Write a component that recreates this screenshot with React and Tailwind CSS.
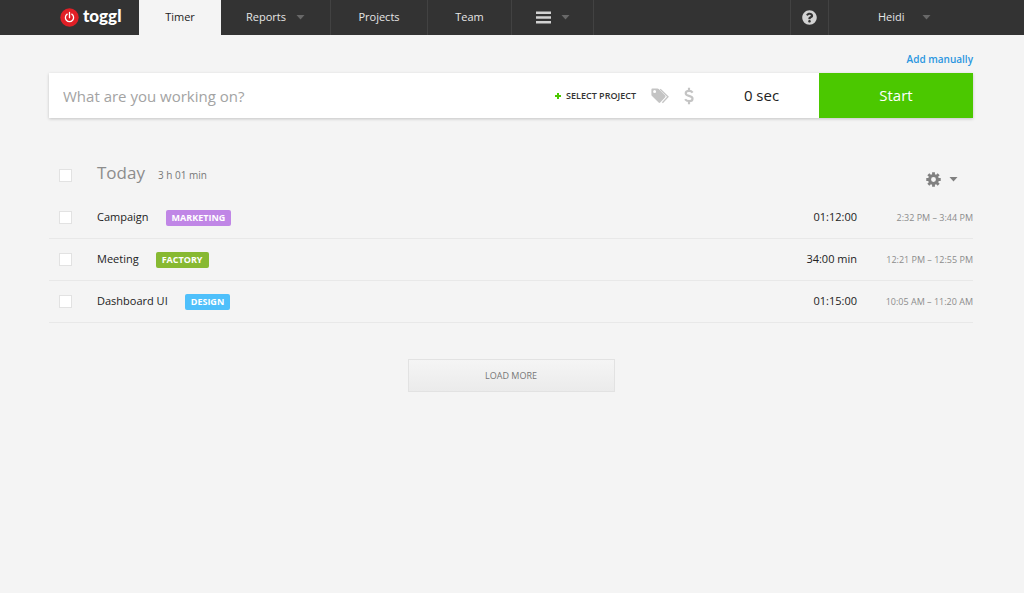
import { useState } from 'react'
import { FaQuestionCircle } from 'react-icons/fa'

const entries = [
  { id: 1, title: 'Campaign', project: 'MARKETING', color: 'bg-[#c086e6]', duration: '01:12:00', range: '2:32 PM – 3:44 PM' },
  { id: 2, title: 'Meeting', project: 'FACTORY', color: 'bg-[#87b932]', duration: '34:00 min', range: '12:21 PM – 12:55 PM' },
  { id: 3, title: 'Dashboard UI', project: 'DESIGN', color: 'bg-[#4fc0fb]', duration: '01:15:00', range: '10:05 AM – 11:20 AM' },
]

function Logo() {
  return (
    <a href="#" className="flex w-[139px] shrink-0 items-center gap-1 pl-[60px]">
      <svg width="19" height="19" viewBox="0 0 19 19" fill="none" className="shrink-0">
        <circle cx="9.5" cy="9.5" r="9.2" fill="#e01f26" />
        <path d="M7.2 6.1a4.1 4.1 0 1 0 4.6 0M9.5 4.5v5.2" stroke="#fff" strokeWidth="1.3" strokeLinecap="round" />
      </svg>
      <span className="pb-1 font-['Lato',sans-serif] text-[17px] leading-5 font-black text-white">toggl</span>
    </a>
  )
}

function Caret({ className }) {
  return (
    <svg width="9" height="5" viewBox="0 0 9 5" fill="currentColor" className={className}>
      <path d="M0.5 0h8L4.5 4.6z" />
    </svg>
  )
}

function BarsIcon() {
  return (
    <svg width="15" height="13" viewBox="0 0 15 13" fill="#d2d2d2">
      <path d="M0 0.5h15v2.4H0zM0 5.3h15v2.4H0zM0 10.1h15v2.4H0z" />
    </svg>
  )
}

function TagsIcon() {
  return (
    <svg width="18" height="16" viewBox="0 0 18 16">
      <path d="M9.2 1.2L17 8.7 11.4 14.8" fill="none" stroke="#c4c4c4" strokeWidth="1.3" />
      <path
        fillRule="evenodd"
        fill="#c4c4c4"
        d="M1.3 0.6h5.2c0.500 0 0.900 0.200 1.200 0.500l6.500 6.500c0.500 0.500 0.500 1.100 0 1.600l-5 5.300c-0.500 0.500-1.100 0.500-1.600 0L1 8C0.600 7.600 0.400 7.200 0.400 6.700V1.500c0-0.500 0.400-0.900 0.900-0.900zM3.600 2.100a1.500 1.500 0 1 0 0 3 1.500 1.500 0 0 0 0-3z"
      />
    </svg>
  )
}

function DollarIcon() {
  return (
    <svg width="10" height="18" viewBox="0 0 11 18" fill="none" stroke="#c4c4c4" strokeWidth="2.4">
      <path d="M5.5 0v3.500M5.500 14.500V18M9.500 5.300C8.600 4 7.200 3.300 5.600 3.300 3.400 3.300 1.900 4.400 1.900 6c0 1.700 1.500 2.400 3.600 2.900 2.300 0.600 3.900 1.300 3.900 3.100 0 1.700-1.600 2.700-3.800 2.700-1.900 0-3.500-0.700-4.400-2.100" />
    </svg>
  )
}

function GearIcon() {
  return (
    <svg width="15" height="15" viewBox="0 0 16 16" fill="none" stroke="currentColor">
      <circle cx="8" cy="8" r="4.2" strokeWidth="3.2" />
      <path
        strokeWidth="3"
        d="M8 0.3v3M8 12.7v3M0.3 8h3M12.7 8h3M2.5 2.5l2.1 2.1M11.4 11.4l2.1 2.1M2.5 13.500l2.100-2.100M11.400 4.600l2.100-2.100"
      />
    </svg>
  )
}

function Checkbox({ label }) {
  return (
    <input
      type="checkbox"
      aria-label={label}
      className="size-[13px] shrink-0 appearance-none border border-[#e2e2e2] bg-white checked:bg-[#4bc800]"
    />
  )
}

function Entry({ entry }) {
  return (
    <li className="flex h-[42px] items-center border-b border-[#e8e8e8] pl-[10px]">
      <Checkbox label={entry.title} />
      <span className="ml-[25px] text-[11px] text-[#222]">{entry.title}</span>
      <span className={`ml-[17px] rounded-xs px-[6px] text-[9px] leading-4 font-bold text-white ${entry.color}`}>
        {entry.project}
      </span>
      <span className="ml-auto text-[11px] text-[#222]">{entry.duration}</span>
      <span className="w-[116px] text-right text-[9px] text-[#8c8c8c]">{entry.range}</span>
    </li>
  )
}

export default function App() {
  const [task, setTask] = useState('')

  return (
    <div className="min-h-screen bg-[#f4f4f4] font-['Open_Sans',sans-serif]">
      <header className="flex h-[35px] bg-[#333] text-[11px] text-[#e6e6e6]">
        <Logo />
        <nav className="flex">
          <a href="#timer" className="flex w-[82px] items-center justify-center bg-[#f4f4f4] text-[#222]">Timer</a>
          <a href="#reports" className="flex w-[110px] items-center justify-center gap-[10px] border-r border-[#424242]">
            Reports
            <Caret className="text-[#686868]" />
          </a>
          <a href="#projects" className="flex w-[97px] items-center justify-center border-r border-[#424242]">Projects</a>
          <a href="#team" className="flex w-[84px] items-center justify-center border-r border-[#424242]">Team</a>
          <button aria-label="More" className="flex w-[82px] items-center justify-center gap-[10px] border-r border-[#424242]">
            <BarsIcon />
            <Caret className="text-[#686868]" />
          </button>
        </nav>
        <button aria-label="Help" className="ml-auto flex w-[39px] items-center justify-center border-x border-[#424242]">
          <FaQuestionCircle size={15} className="text-[#d2d2d2]" />
        </button>
        <button className="flex w-[195px] items-center gap-[17px] pl-[49px]">
          Heidi
          <Caret className="text-[#686868]" />
        </button>
      </header>

      <main className="pt-4 pr-[51px] pl-[49px]">
        <div className="flex justify-end">
          <a href="#manual" className="text-[10px] leading-4 font-semibold text-[#2a96e0]">Add manually</a>
        </div>

        {/* Timer bar */}
        <form onSubmit={(e) => e.preventDefault()} className="mt-[6px] flex h-[45px] items-center bg-white shadow-[0_1px_3px_rgba(0,0,0,0.2)]">
          <input
            aria-label="What are you working on?"
            placeholder="What are you working on?"
            value={task}
            onChange={(e) => setTask(e.target.value)}
            className="h-full min-w-0 flex-1 pl-[14px] text-[15px] text-[#222] outline-none placeholder:text-[#a3a3a3]"
          />
          <button type="button" className="flex items-center gap-1 text-[9px] font-semibold text-[#333]">
            <svg width="8" height="8" viewBox="0 0 8 8" stroke="#4bc800" strokeWidth="2">
              <path d="M4 1v6M1 4h6" />
            </svg>
            SELECT PROJECT
          </button>
          <button type="button" aria-label="Tags" className="ml-[15px]">
            <TagsIcon />
          </button>
          <button type="button" aria-label="Billable" className="ml-[15px]">
            <DollarIcon />
          </button>
          <span className="w-[125px] pl-[10px] text-center text-[15px] text-[#222]">0 sec</span>
          <button type="submit" className="h-full w-[154px] bg-[#4bc800] text-[15px] text-white">Start</button>
        </form>

        {/* Today */}
        <section className="mt-[35px]">
          <div className="flex h-11 items-center pl-[10px]">
            <Checkbox label="Select all" />
            <div className="ml-[25px] flex items-baseline gap-[13px] pb-1">
              <h2 className="text-[17px] text-[#8c8c8c]">Today</h2>
              <span className="text-[10px] text-[#777]">3 h 01 min</span>
            </div>
            <button aria-label="Settings" className="mt-2 mr-[15px] ml-auto flex items-center gap-2 text-[#808080]">
              <GearIcon />
              <Caret />
            </button>
          </div>
          <ul>
            {entries.map((entry) => (
              <Entry key={entry.id} entry={entry} />
            ))}
          </ul>
        </section>

        <button className="mx-auto mt-9 block h-[33px] w-[207px] border border-[#e2e2e2] bg-linear-to-b from-[#f5f5f5] to-[#ebebeb] text-[9px] text-[#777]">
          LOAD MORE
        </button>
      </main>
    </div>
  )
}
